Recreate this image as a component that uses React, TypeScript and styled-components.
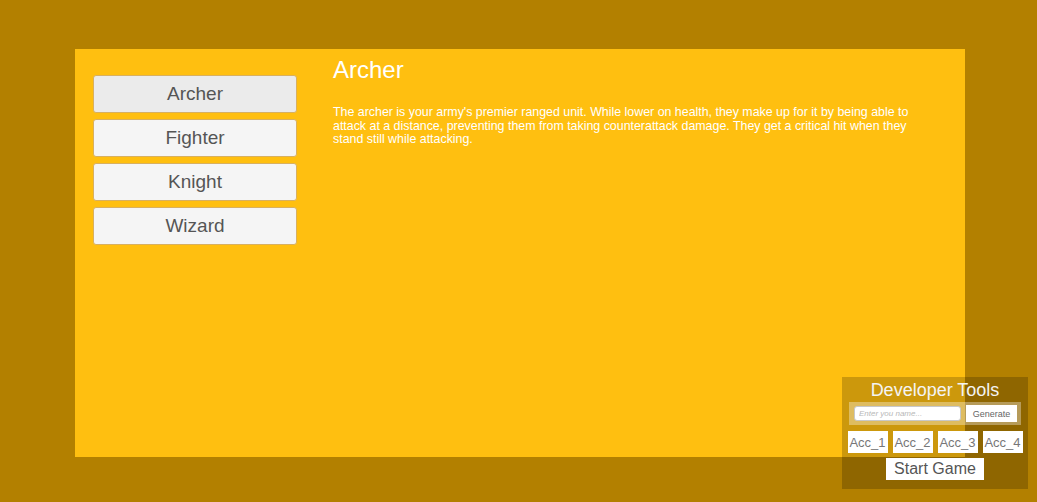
import styled, { createGlobalStyle } from 'styled-components';
import { FC, useState } from 'react';

const GlobalStyle = createGlobalStyle`
	html, body {
		margin: 0;
		padding: 0;
		background: #b38000;
		font-family: 'Liberation Sans', Arial, sans-serif;
	}
`;

interface UnitInfo {
	name: string;
	description: string;
}

const units: UnitInfo[] = [
	{
		name: 'Archer',
		description:
			"The archer is your army's premier ranged unit. While lower on health, they make up for it by being able to attack at a distance, preventing them from taking counterattack damage. They get a critical hit when they stand still while attacking.",
	},
	{ name: 'Fighter', description: 'The fighter is a sturdy melee unit.' },
	{ name: 'Knight', description: 'The knight is a heavily armored unit.' },
	{ name: 'Wizard', description: 'The wizard casts powerful spells.' },
];

const accounts = ['Acc_1', 'Acc_2', 'Acc_3', 'Acc_4'];

const App: FC = () => {
	const [selected, setSelected] = useState(0);
	const unit = units[selected];

	return (
		<>
			<GlobalStyle />
			<Screen>
				<Panel>
					<UnitList>
						{units.map((u, i) => (
							<UnitButton
								key={u.name}
								$active={i === selected}
								onClick={() => setSelected(i)}
							>
								{u.name}
							</UnitButton>
						))}
					</UnitList>
					<Details>
						<Title>{unit.name}</Title>
						<Description>{unit.description}</Description>
					</Details>
				</Panel>
				<DevTools>
					<DevTitle>Developer Tools</DevTitle>
					<NameRow>
						<NameInput placeholder="Enter you name..." />
						<SmallButton>Generate</SmallButton>
					</NameRow>
					<AccRow>
						{accounts.map((acc) => (
							<AccButton key={acc}>{acc}</AccButton>
						))}
					</AccRow>
					<StartButton>Start Game</StartButton>
				</DevTools>
			</Screen>
		</>
	);
};

export default App;

const Screen = styled.div`
	position: relative;
	width: 1037px;
	height: 502px;
	padding: 49px 0 0 75px;
	box-sizing: border-box;
	overflow: hidden;
`;

const Panel = styled.div`
	display: flex;
	width: 890px;
	height: 408px;
	background: #ffbf10;
`;

const UnitList = styled.div`
	display: flex;
	flex-direction: column;
	gap: 6px;
	width: 204px;
	padding: 26px 0 0 18px;
`;

const UnitButton = styled.button<{ $active: boolean }>`
	height: 38px;
	background: ${(props) => (props.$active ? '#ebebeb' : '#f5f5f5')};
	border: 1px solid #d8b060;
	border-radius: 3px;
	color: #555;
	font-family: 'Liberation Sans', Arial, sans-serif;
	font-size: 19px;
	cursor: pointer;
	padding: 0;
`;

const Details = styled.div`
	display: flex;
	flex-direction: column;
	padding: 7px 0 0 36px;
	width: 582px;
	color: #fff;
`;

const Title = styled.h1`
	margin: 0;
	font-size: 24px;
	font-weight: normal;
	line-height: 28px;
`;

const Description = styled.p`
	margin: 22px 0 0;
	font-size: 12.4px;
	line-height: 13.5px;
`;

const DevTools = styled.div`
	position: absolute;
	left: 842px;
	top: 377px;
	width: 186px;
	height: 112px;
	display: flex;
	flex-direction: column;
	align-items: center;
	background: rgba(0, 0, 0, 0.2);
`;

const DevTitle = styled.div`
	color: #f4f4f4;
	font-size: 18px;
	line-height: 24px;
	margin-top: 1px;
`;

const NameRow = styled.div`
	display: flex;
	align-items: center;
	gap: 5px;
	width: 172px;
	height: 23px;
	box-sizing: border-box;
	padding: 0 4px 0 5px;
	background: rgba(255, 255, 255, 0.35);
`;

const NameInput = styled.input`
	width: 107px;
	height: 15px;
	box-sizing: border-box;
	border: 1px solid #c8c8c8;
	border-radius: 3px;
	background: #fff;
	font-family: 'Liberation Sans', Arial, sans-serif;
	font-size: 8px;
	font-style: italic;
	padding: 0 4px;
	&::placeholder {
		color: #b8b8b8;
	}
`;

const SmallButton = styled.button`
	width: 51px;
	height: 17px;
	border: none;
	background: #fff;
	color: #666;
	font-family: 'Liberation Sans', Arial, sans-serif;
	font-size: 9px;
	padding: 0;
`;

const AccRow = styled.div`
	display: flex;
	gap: 5px;
	margin-top: 6px;
`;

const AccButton = styled.button`
	width: 40px;
	height: 22px;
	border: none;
	background: #fff;
	color: #777;
	font-family: 'Liberation Sans', Arial, sans-serif;
	font-size: 13px;
	padding: 0;
`;

const StartButton = styled.button`
	margin-top: 5px;
	width: 98px;
	height: 22px;
	border: none;
	background: #fff;
	color: #555;
	font-family: 'Liberation Sans', Arial, sans-serif;
	font-size: 16px;
	padding: 0;
`;
